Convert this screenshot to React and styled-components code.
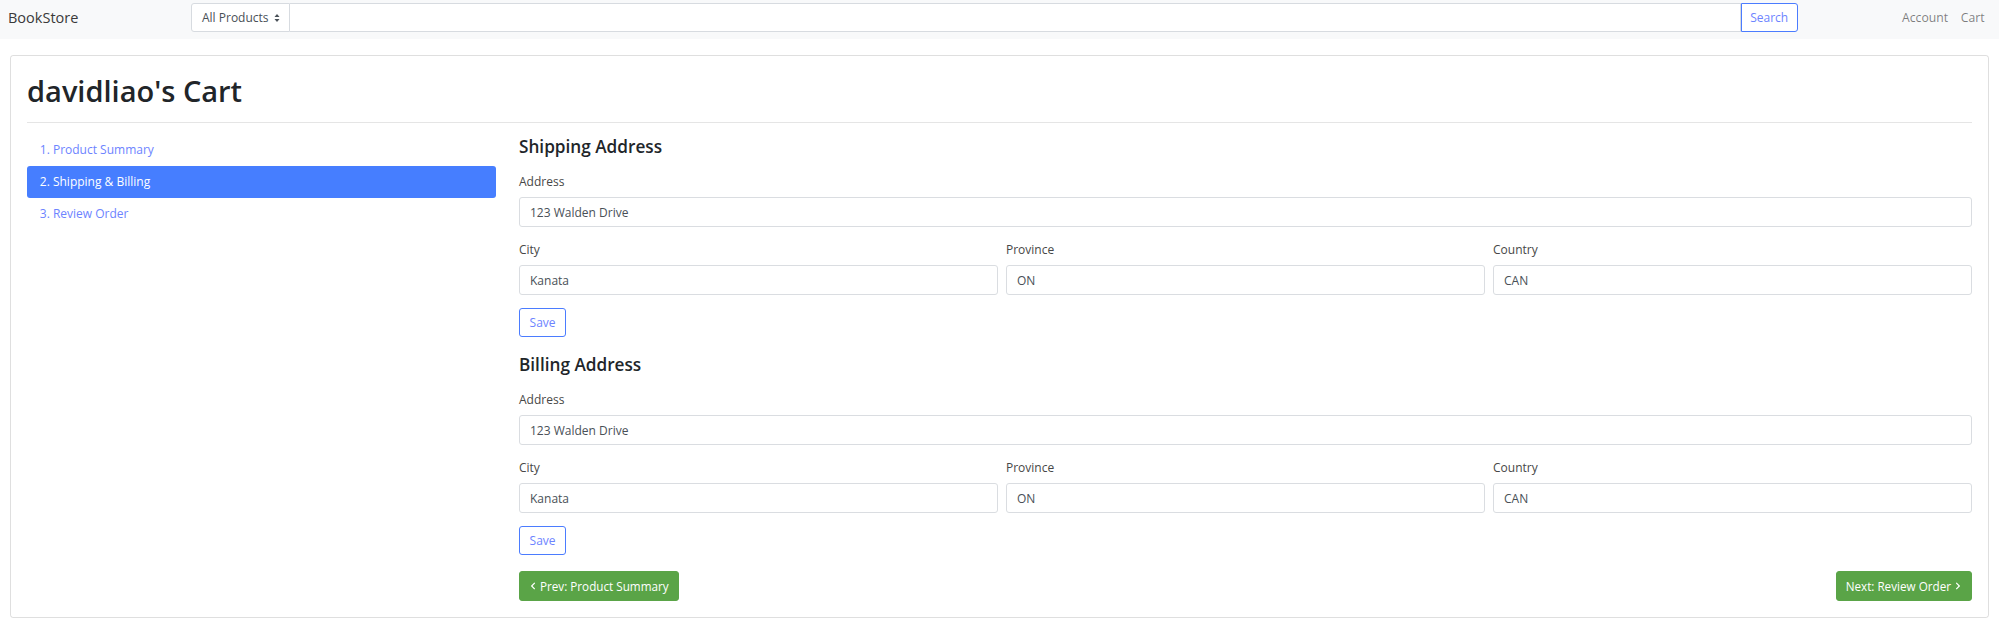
import { createGlobalStyle, styled } from "styled-components";
import { FaChevronLeft, FaChevronRight } from "react-icons/fa";

const GlobalStyle = createGlobalStyle`
  * {
    box-sizing: border-box;
  }
  body {
    margin: 0;
    background: #fff;
    color: #212529;
    font-family: "Open Sans", "Noto Sans", sans-serif;
    font-size: 12px;
  }
`;

const Navbar = styled.nav`
  display: flex;
  align-items: flex-start;
  height: 39px;
  padding: 3px 8px 0 8px;
  background: #f8f9fa;
`;

const Brand = styled.div`
  flex: 0 0 183px;
  font-size: 14.5px;
  line-height: 29px;
  color: #3a3a3a;
`;

const SearchGroup = styled.form`
  flex: 1;
  display: flex;
  height: 29px;
`;

const CategorySelect = styled.div`
  flex: 0 0 99px;
  display: flex;
  align-items: center;
  justify-content: space-between;
  padding: 0 9px 0 10px;
  border: 1px solid #d7dbe0;
  border-radius: 3px 0 0 3px;
  background: #fff;
  color: #495057;
`;

const SearchInput = styled.input`
  flex: 1;
  border: 1px solid #d7dbe0;
  border-left: 0;
  outline: none;
  background: #fff;
`;

const OutlineButton = styled.button`
  height: 29px;
  padding: 0 ${(p) => p.$pad || "9.6px"};
  border: 1px solid #4b7cff;
  border-radius: ${(p) => p.$radius || "3px"};
  background: #fff;
  color: #6d84ff;
  font-family: inherit;
  font-size: 12px;
`;

const NavLinks = styled.div`
  display: flex;
  margin-left: 98px;
`;

const NavLink = styled.a`
  padding: 0 6.4px;
  line-height: 29px;
  font-size: 12.2px;
  color: rgba(0, 0, 0, 0.5);
`;

const Page = styled.main`
  padding: 16px 10px 0 10px;
`;

const Card = styled.section`
  border: 1px solid rgba(0, 0, 0, 0.125);
  border-radius: 3px;
  padding: 16px;
`;

const Title = styled.h1`
  margin: 0;
  font-size: 29px;
  font-weight: 600;
  line-height: 38px;
  color: #212529;
`;

const Divider = styled.hr`
  margin: 12px 0;
  border: 0;
  border-top: 1px solid rgba(0, 0, 0, 0.1);
`;

const Layout = styled.div`
  display: grid;
  grid-template-columns: 469px 1fr;
  column-gap: 23px;
`;

const Steps = styled.div`
  display: flex;
  flex-direction: column;
  margin-top: -1px;
`;

const Step = styled.a`
  display: block;
  padding: 6.4px 12.8px;
  line-height: 19.2px;
  border-radius: 3px;
  background: ${(p) => (p.$active ? "#467eff" : "transparent")};
  color: ${(p) => (p.$active ? "#fff" : "#6d84ff")};
`;

const Section = styled.div`
  margin-bottom: 16px;
`;

const SectionTitle = styled.h4`
  margin: 0 0 14px 0;
  font-size: 17.2px;
  font-weight: 600;
  line-height: 23px;
  color: #212529;
`;

const Field = styled.div`
  margin-bottom: 13px;
`;

const Label = styled.label`
  display: block;
  margin-bottom: 6px;
  line-height: 19px;
  color: #474747;
`;

const TextInput = styled.input`
  display: block;
  width: 100%;
  height: 30px;
  padding: 0 10px;
  border: 1px solid #dadde1;
  border-radius: 3px;
  background: #fff;
  color: #495057;
  font-family: inherit;
  font-size: 12px;
  outline: none;
`;

const FieldRow = styled.div`
  display: grid;
  grid-template-columns: repeat(3, 1fr);
  column-gap: 8px;
`;

const Footer = styled.div`
  display: flex;
  justify-content: space-between;
`;

const GreenButton = styled.button`
  display: inline-flex;
  align-items: center;
  gap: 3px;
  height: 30px;
  padding: 0 9px;
  border: 1px solid #5aa447;
  border-radius: 3px;
  background: #5aa447;
  color: #fff;
  font-family: inherit;
  font-size: 11.7px;
`;

const SelectArrows = () => (
  <svg width="6" height="10" viewBox="0 0 6 10">
    <path d="M0.5 4 L3 1 L5.5 4 Z" fill="#495057" />
    <path d="M0.5 6 L3 9 L5.5 6 Z" fill="#495057" />
  </svg>
);

const AddressForm = ({ title }) => (
  <Section>
    <SectionTitle>{title}</SectionTitle>
    <Field>
      <Label>Address</Label>
      <TextInput defaultValue="123 Walden Drive" />
    </Field>
    <FieldRow>
      <Field>
        <Label>City</Label>
        <TextInput defaultValue="Kanata" />
      </Field>
      <Field>
        <Label>Province</Label>
        <TextInput defaultValue="ON" />
      </Field>
      <Field>
        <Label>Country</Label>
        <TextInput defaultValue="CAN" />
      </Field>
    </FieldRow>
    <OutlineButton type="button">Save</OutlineButton>
  </Section>
);

const steps = ["1. Product Summary", "2. Shipping & Billing", "3. Review Order"];

const App = () => {
  return (
    <>
      <GlobalStyle />
      <Navbar>
        <Brand>BookStore</Brand>
        <SearchGroup onSubmit={(e) => e.preventDefault()}>
          <CategorySelect>
            All Products
            <SelectArrows />
          </CategorySelect>
          <SearchInput />
          <OutlineButton type="submit" $radius="0 3px 3px 0" $pad="8.5px">
            Search
          </OutlineButton>
        </SearchGroup>
        <NavLinks>
          <NavLink>Account</NavLink>
          <NavLink>Cart</NavLink>
        </NavLinks>
      </Navbar>
      <Page>
        <Card>
          <Title>davidliao's Cart</Title>
          <Divider />
          <Layout>
            <Steps>
              {steps.map((s, i) => (
                <Step key={s} $active={i === 1}>
                  {s}
                </Step>
              ))}
            </Steps>
            <div>
              <AddressForm title="Shipping Address" />
              <AddressForm title="Billing Address" />
              <Footer>
                <GreenButton type="button">
                  <FaChevronLeft size={8} />
                  Prev: Product Summary
                </GreenButton>
                <GreenButton type="button">
                  Next: Review Order
                  <FaChevronRight size={8} />
                </GreenButton>
              </Footer>
            </div>
          </Layout>
        </Card>
      </Page>
    </>
  );
};

export default App;
